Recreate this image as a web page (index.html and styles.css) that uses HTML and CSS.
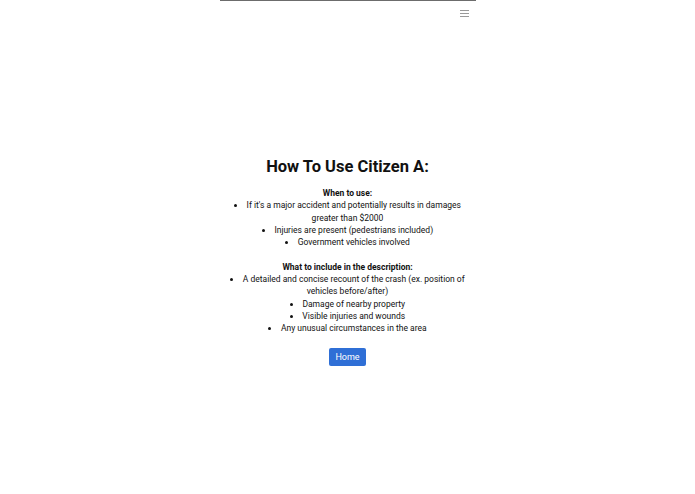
FILE: index.html
```html
<!DOCTYPE html>
<html>
<head>
<meta charset="utf-8">
<link rel="stylesheet" href="styles.css">
</head>
<body>
<div class="page">
  <nav class="navbar">
    <button class="toggler" aria-label="menu">
      <span></span><span></span><span></span>
    </button>
  </nav>
  <main class="content">
    <h1 class="title">How To Use Citizen A:</h1>
    <div class="section">
      <p class="heading">When to use:</p>
      <ul class="list">
        <li>If it's a major accident and potentially results in damages greater than $2000</li>
        <li>Injuries are present (pedestrians included)</li>
        <li>Government vehicles involved</li>
      </ul>
    </div>
    <div class="section gap">
      <p class="heading">What to include in the description:</p>
      <ul class="list">
        <li>A detailed and concise recount of the crash (ex. position of vehicles before/after)</li>
        <li>Damage of nearby property</li>
        <li>Visible injuries and wounds</li>
        <li>Any unusual circumstances in the area</li>
      </ul>
    </div>
    <a class="btn" href="#">Home</a>
  </main>
</div>
</body>
</html>
```
FILE: styles.css
```css
html, body {
  margin: 0;
  padding: 0;
  background: #fff;
}
body {
  font-family: Roboto, "Liberation Sans", sans-serif;
  color: #212529;
}
.page {
  width: 256px;
  margin: 0 auto;
  border-top: 1px solid #6c6c6c;
  min-height: 493px;
}
.navbar {
  display: flex;
  justify-content: flex-end;
  padding: 9px 7px 0 0;
  height: 16px;
}
.toggler {
  border: 0;
  background: none;
  padding: 0;
  width: 9px;
  height: 7px;
  display: flex;
  flex-direction: column;
  justify-content: space-between;
  cursor: pointer;
}
.toggler span {
  display: block;
  height: 1px;
  width: 9px;
  background: #9a9a9a;
}
.content {
  display: flex;
  flex-direction: column;
  align-items: center;
  text-align: center;
  padding: 131px 10px 0;
}
.title {
  margin: 0 0 10px;
  font-size: 16.5px;
  line-height: 20px;
  font-weight: 700;
  color: #111;
}
.section {
  font-size: 8.5px;
  line-height: 12.3px;
  color: #111;
}
.section.gap {
  margin-top: 12.3px;
}
.heading {
  margin: 0;
  font-weight: 700;
}
.list {
  margin: 0;
  padding: 0;
  list-style: disc inside;
}
.btn {
  margin-top: 13px;
  display: inline-block;
  background: #2f6fd6;
  color: #fff;
  text-decoration: none;
  font-size: 9px;
  line-height: 18px;
  height: 18px;
  padding: 0 6px;
  border-radius: 2px;
}
```
